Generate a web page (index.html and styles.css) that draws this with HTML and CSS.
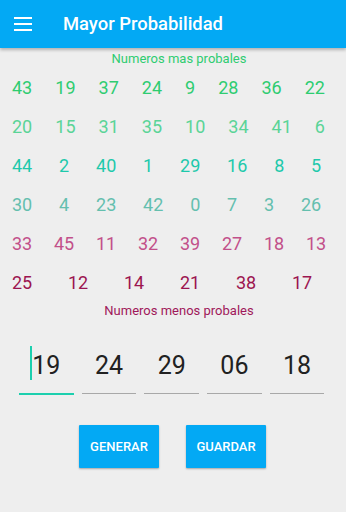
FILE: index.html
```html
<!DOCTYPE html>
<html lang="es">
<head>
<meta charset="utf-8">
<title>Mayor Probabilidad</title>
<link rel="stylesheet" href="styles.css">
</head>
<body>
<header class="appbar">
  <svg class="menu" width="18" height="14" viewBox="0 0 18 14" aria-hidden="true">
    <rect x="0" y="0" width="18" height="2" fill="#fff"/>
    <rect x="0" y="6" width="18" height="2" fill="#fff"/>
    <rect x="0" y="12" width="18" height="2" fill="#fff"/>
  </svg>
  <h1 class="title">Mayor Probabilidad</h1>
</header>
<main class="content">
  <p class="label label-top">Numeros mas probales</p>
  <div class="grid">
    <div class="row r1"><span>43</span><span>19</span><span>37</span><span>24</span><span>9</span><span>28</span><span>36</span><span>22</span></div>
    <div class="row r2"><span>20</span><span>15</span><span>31</span><span>35</span><span>10</span><span>34</span><span>41</span><span>6</span></div>
    <div class="row r3"><span>44</span><span>2</span><span>40</span><span>1</span><span>29</span><span>16</span><span>8</span><span>5</span></div>
    <div class="row r4"><span>30</span><span>4</span><span>23</span><span>42</span><span>0</span><span>7</span><span>3</span><span>26</span></div>
    <div class="row r5"><span>33</span><span>45</span><span>11</span><span>32</span><span>39</span><span>27</span><span>18</span><span>13</span></div>
    <div class="row r6"><span>25</span><span>12</span><span>14</span><span>21</span><span>38</span><span>17</span></div>
  </div>
  <p class="label label-bottom">Numeros menos probales</p>
  <div class="fields">
    <div class="field focused"><span class="val"><span class="caret"></span>19</span></div>
    <div class="field"><span class="val">24</span></div>
    <div class="field"><span class="val">29</span></div>
    <div class="field"><span class="val">06</span></div>
    <div class="field"><span class="val">18</span></div>
  </div>
  <div class="actions">
    <button class="btn" type="button">GENERAR</button>
    <button class="btn" type="button">GUARDAR</button>
  </div>
</main>
</body>
</html>
```

FILE: styles.css
```css
html, body {
  margin: 0;
  padding: 0;
}
body {
  width: 346px;
  height: 512px;
  overflow: hidden;
  background: #eeeeee;
  font-family: Roboto, "Liberation Sans", Arial, sans-serif;
}
.appbar {
  height: 48px;
  background: #03a9f4;
  display: flex;
  align-items: center;
  box-shadow: 0 2px 3px rgba(0, 0, 0, 0.25);
  position: relative;
  z-index: 1;
}
.menu {
  margin-left: 14px;
  flex: none;
}
.title {
  margin: 0 0 0 31px;
  color: #ffffff;
  font-size: 18.4px;
  font-weight: 500;
  line-height: 24px;
}
.content {
  display: flex;
  flex-direction: column;
}
.label {
  margin: 0;
  padding-left: 12px;
  text-align: center;
  font-size: 13px;
  line-height: 15px;
}
.label-top {
  margin-top: 3px;
  color: #2ecc71;
}
.label-bottom {
  margin-top: 1px;
  color: #a0185a;
}
.grid {
  margin-top: 2px;
  padding-left: 12px;
  width: 336px;
}
.row {
  display: flex;
  height: 39px;
  align-items: center;
  font-size: 18px;
  line-height: 22px;
}
.row span {
  flex: 1 1 auto;
}
.r1 { color: #2ecc71; }
.r2 { color: #5ad497; }
.r3 { color: #1ec9ab; }
.r4 { color: #64bfae; }
.r5 { color: #c2508a; }
.r6 { color: #9c1550; }
.fields {
  display: flex;
  margin-top: 28px;
  padding-left: 15px;
}
.field {
  width: 54.7px;
  margin: 0 4px;
  height: 48px;
  box-sizing: border-box;
  display: flex;
  justify-content: center;
  padding-top: 2px;
  border-bottom: 1px solid #a8a8a8;
}
.field.focused {
  border-bottom: 2px solid #1ccfae;
  height: 49px;
}
.val {
  position: relative;
  font-size: 25px;
  line-height: 35px;
  height: 35px;
  color: #212121;
}
.caret {
  position: absolute;
  left: -2px;
  top: -2px;
  width: 1.5px;
  height: 34px;
  background: #1ccfae;
}
.actions {
  display: flex;
  justify-content: center;
  gap: 27px;
  margin-top: 30px;
  padding-right: 1px;
}
.btn {
  width: 80px;
  height: 43px;
  border: none;
  border-radius: 1px;
  background: #03a9f4;
  color: #ffffff;
  font-family: Roboto, "Liberation Sans", Arial, sans-serif;
  font-size: 13px;
  font-weight: 500;
  padding: 0;
  box-shadow: 0 1px 2px rgba(0, 0, 0, 0.3);
}
```
